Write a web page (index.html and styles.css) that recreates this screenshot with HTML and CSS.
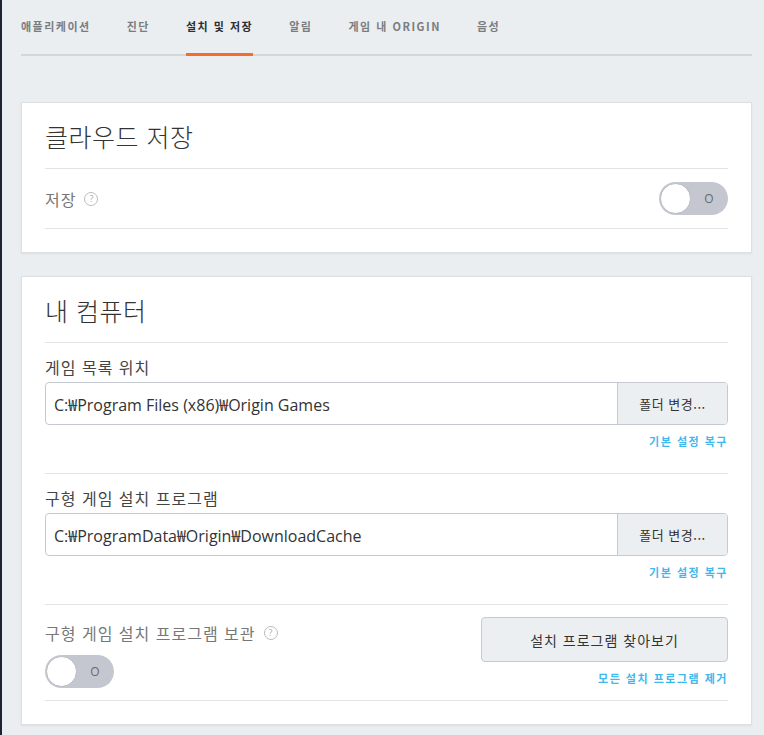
FILE: index.html
```html
<!DOCTYPE html>
<html lang="ko">
<head>
    <meta charset="UTF-8">
    <title>설치 및 저장</title>
    <link rel="stylesheet" href="styles.css">
</head>
<body>
    <div class="page">
        <nav class="tabs">
            <a class="tab">애플리케이션</a>
            <a class="tab">진단</a>
            <a class="tab active">설치 및 저장</a>
            <a class="tab">알림</a>
            <a class="tab">게임 내 ORIGIN</a>
            <a class="tab">음성</a>
        </nav>

        <!-- 클라우드 저장 -->
        <section class="card">
            <h2 class="card-title">클라우드 저장</h2>
            <div class="row">
                <span class="row-label muted">저장 <span class="help">?</span></span>
                <div class="toggle"><span class="knob"></span><span class="toggle-text">O</span></div>
            </div>
        </section>

        <!-- 내 컴퓨터 -->
        <section class="card">
            <h2 class="card-title">내 컴퓨터</h2>

            <div class="block">
                <div class="label">게임 목록 위치</div>
                <div class="path-group">
                    <div class="path">C:₩Program Files (x86)₩Origin Games</div>
                    <button class="path-btn">폴더 변경...</button>
                </div>
                <a class="link">기본 설정 복구</a>
            </div>

            <div class="block">
                <div class="label">구형 게임 설치 프로그램</div>
                <div class="path-group">
                    <div class="path">C:₩ProgramData₩Origin₩DownloadCache</div>
                    <button class="path-btn">폴더 변경...</button>
                </div>
                <a class="link">기본 설정 복구</a>
            </div>

            <div class="block split">
                <div class="split-left">
                    <div class="label muted">구형 게임 설치 프로그램 보관 <span class="help">?</span></div>
                    <div class="toggle"><span class="knob"></span><span class="toggle-text">O</span></div>
                </div>
                <div class="split-right">
                    <button class="wide-btn">설치 프로그램 찾아보기</button>
                    <a class="link">모든 설치 프로그램 제거</a>
                </div>
            </div>
        </section>
    </div>
</body>
</html>
```

FILE: styles.css
```css
body {
    margin: 0;
    background: #ebeef0;
    font-family: "Open Sans", "Noto Sans CJK KR", sans-serif;
    color: #333;
    height: 735px;
    overflow: hidden;
}

.page {
    border-left: 2px solid #1c2331;
    padding: 0 12px 0 19px;
    min-height: 735px;
    box-sizing: border-box;
}

.tabs {
    display: flex;
    gap: 36px;
    padding-top: 17px;
    border-bottom: 2px solid #d3d7db;
    margin-bottom: 46px;
}

.tab {
    font-family: "Noto Sans CJK KR", "Open Sans", sans-serif;
    font-size: 11px;
    font-weight: bold;
    letter-spacing: 1.5px;
    color: #7a7d80;
    line-height: 18px;
    padding-bottom: 18px;
    margin-bottom: -2px;
    border-bottom: 3px solid transparent;
}

.tab.active {
    color: #2e2f31;
    border-bottom-color: #f56c2d;
}

.card {
    background: #fff;
    border: 1px solid #dde0e3;
    box-shadow: 0 1px 2px rgba(0,0,0,0.06);
    padding: 0 23px 23px;
    margin-bottom: 23px;
}

.card-title {
    font-family: "Noto Sans CJK KR", sans-serif;
    font-size: 25px;
    font-weight: 300;
    letter-spacing: 0.5px;
    color: #333;
    margin: 0;
    line-height: 32px;
    padding: 17px 0 16px;
    border-bottom: 1px solid #e1e4e7;
}

.row {
    display: flex;
    justify-content: space-between;
    align-items: center;
    padding: 13px 0;
    border-bottom: 1px solid #e1e4e7;
}

.row-label, .label {
    font-family: "Noto Sans CJK KR", sans-serif;
    font-size: 16px;
    letter-spacing: 1px;
    line-height: 20px;
    color: #444;
    display: flex;
    align-items: center;
}

.muted {
    color: #777;
}

.help {
    display: inline-flex;
    align-items: center;
    justify-content: center;
    width: 12px;
    height: 12px;
    border: 1px solid #b9bcc0;
    border-radius: 50%;
    font-family: "Open Sans", sans-serif;
    font-size: 9px;
    letter-spacing: 0;
    color: #a9acb0;
    margin-left: 8px;
}

.toggle {
    width: 69px;
    height: 33px;
    border-radius: 17px;
    background: #c4c7cf;
    display: flex;
    align-items: center;
    box-sizing: border-box;
    padding: 1px;
}

.knob {
    width: 31px;
    height: 31px;
    border-radius: 50%;
    background: #fff;
    border: 1px solid #b9bcc4;
    box-sizing: border-box;
}

.toggle-text {
    flex: 1;
    text-align: center;
    font-size: 12px;
    color: #676a70;
}

.block {
    padding: 14px 0 24px;
    border-bottom: 1px solid #e1e4e7;
    display: flex;
    flex-direction: column;
}

.block .label {
    margin-bottom: 5px;
}

.path-group {
    display: flex;
    height: 43px;
    border: 1px solid #c6cad0;
    border-radius: 4px;
    overflow: hidden;
    box-sizing: border-box;
}

.path {
    flex: 1;
    display: flex;
    align-items: center;
    padding-left: 8px;
    font-size: 16px;
    color: #333;
}

.path-btn {
    width: 110px;
    border: none;
    border-left: 1px solid #c6cad0;
    background: #eceff1;
    font-family: "Noto Sans CJK KR", sans-serif;
    font-size: 13px;
    letter-spacing: 0.5px;
    color: #333;
}

.link {
    align-self: flex-end;
    margin-top: 8px;
    font-family: "Noto Sans CJK KR", sans-serif;
    font-size: 11px;
    font-weight: bold;
    letter-spacing: 1.5px;
    line-height: 16px;
    color: #3fb8ee;
}

.block.split {
    flex-direction: row;
    justify-content: space-between;
    padding: 12px 0 12px;
}

.split-left .label {
    margin: 6px 0 12px;
}

.split-right {
    display: flex;
    flex-direction: column;
}

.wide-btn {
    width: 247px;
    height: 45px;
    border: 1px solid #c6cad0;
    border-radius: 4px;
    background: #eceff1;
    font-family: "Noto Sans CJK KR", sans-serif;
    font-size: 14px;
    letter-spacing: 1px;
    color: #333;
}
```
